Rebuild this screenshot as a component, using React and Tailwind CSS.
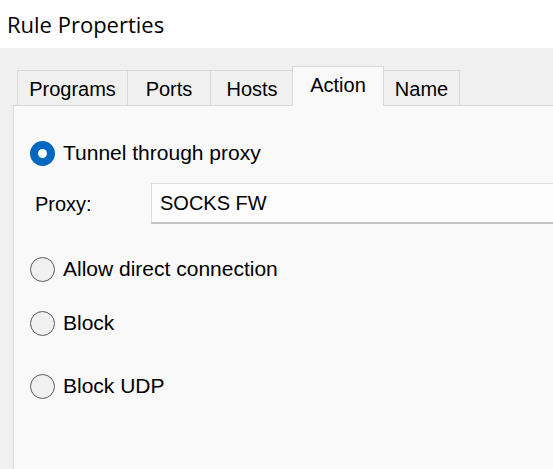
export default function App() {
  const body = { fontFamily: '"Liberation Sans", Arial, sans-serif' };
  const Tab = ({ label, w }) => (
    <div
      className="h-[35px] border border-b-0 border-[#d9d9d9] bg-[#f0f0f0] -ml-px flex items-center justify-center text-[20px] text-black pt-[2px]"
      style={{ width: w }}
    >
      {label}
    </div>
  );
  const Radio = ({ checked }) =>
    checked ? (
      <div className="w-[25px] h-[25px] rounded-full bg-[#0067c0] flex items-center justify-center shrink-0">
        <div className="w-[9px] h-[9px] rounded-full bg-white" />
      </div>
    ) : (
      <div className="w-[25px] h-[25px] rounded-full border-[1.5px] border-[#5a5a5a] bg-[#f0f0f0] shrink-0" />
    );
  return (
    <div className="w-[553px] h-[469px] overflow-hidden flex flex-col bg-[#f0f0f0]" style={body}>
      <div className="h-[48px] bg-white flex items-center pl-[7px] shrink-0">
        <span className="text-[22px] text-black leading-none" style={{ fontFamily: '"Open Sans", "Noto Sans", sans-serif' }}>
          Rule Properties
        </span>
      </div>
      <div className="flex-1 flex flex-col pl-[13px] pt-[18px]">
        <div className="flex items-end pl-[5px] h-[39px] relative z-10">
          <Tab label="Programs" w={111} />
          <Tab label="Ports" w={84} />
          <Tab label="Hosts" w={84} />
          <div className="h-[40px] w-[92px] -mb-px -ml-[2px] border border-b-0 border-[#d9d9d9] bg-[#f9f9f9] flex items-center justify-center text-[20px] text-black pb-[3px]">
            Action
          </div>
          <div className="h-[35px] w-[77px] -ml-px border border-b-0 border-[#d9d9d9] bg-[#f0f0f0] flex items-center justify-center text-[20px] text-black pt-[2px]">
            Name
          </div>
        </div>
        <div className="flex-1 w-[560px] border-l border-t border-[#d9d9d9] bg-[#f9f9f9] flex flex-col pt-[34px] text-[21px] text-black">
          <div className="flex items-center h-[26px] pl-[16px] gap-[8px]">
            <Radio checked />
            <span>Tunnel through proxy</span>
          </div>
          <div className="flex items-center mt-[17px] h-[41px]">
            <span className="pl-[21px] w-[137px] shrink-0 text-[20px]">Proxy:</span>
            <div className="w-[420px] shrink-0 h-[41px] bg-[#fdfdfd] border border-[#dcdcdc] border-b-2 border-b-[#c4c4c4] flex items-center pl-[8px] text-[20px]">
              SOCKS FW
            </div>
          </div>
          <div className="flex items-center h-[26px] pl-[16px] gap-[8px] mt-[32px]">
            <Radio />
            <span>Allow direct connection</span>
          </div>
          <div className="flex items-center h-[26px] pl-[16px] gap-[8px] mt-[28px]">
            <Radio />
            <span>Block</span>
          </div>
          <div className="flex items-center h-[26px] pl-[16px] gap-[8px] mt-[37px]">
            <Radio />
            <span>Block UDP</span>
          </div>
        </div>
      </div>
    </div>
  );
}
